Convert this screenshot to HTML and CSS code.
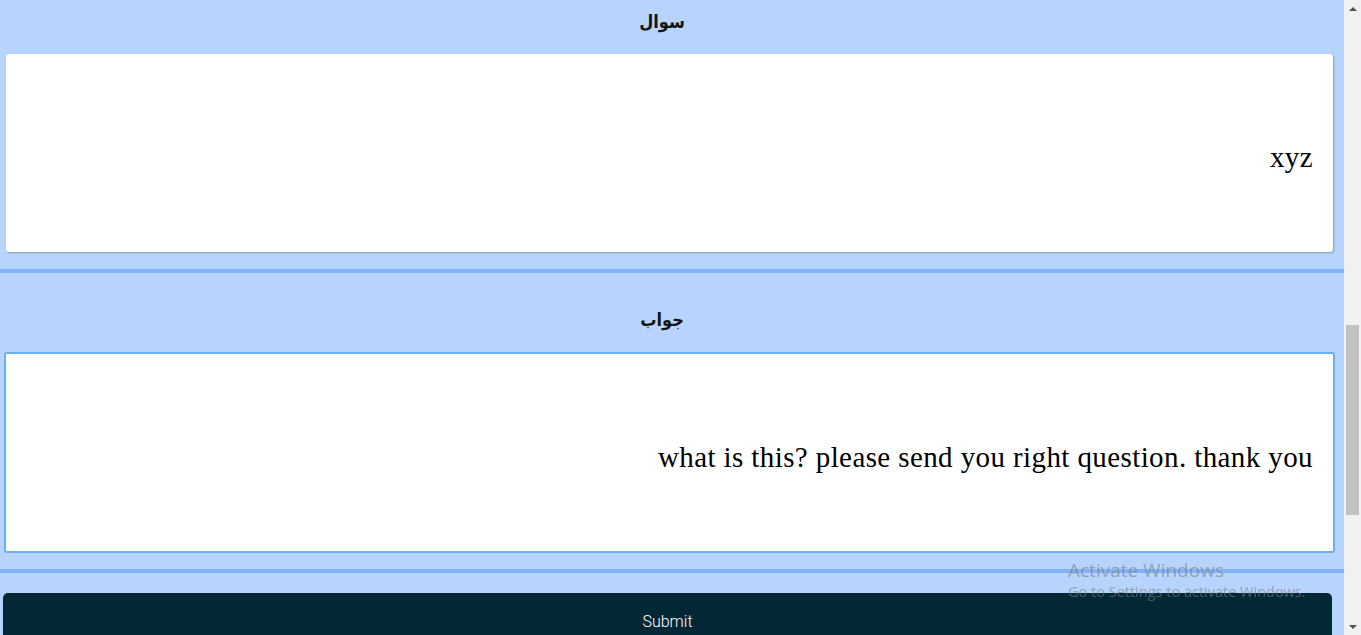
FILE: index.html
```html
<!DOCTYPE html>
<html lang="ur">
<head>
<meta charset="utf-8">
<title>سوال و جواب</title>
<link rel="stylesheet" href="styles.css">
</head>
<body>
<main class="page">
  <div class="earlier"></div>
  <section class="field">
    <hr class="rule">
    <h3 class="label">سوال</h3>
    <div class="box question" dir="ltr"><span>xyz</span></div>
  </section>
  <section class="field">
    <hr class="rule">
    <h3 class="label">جواب</h3>
    <div class="box answer" dir="ltr"><span>what is this? please send you right question. thank you</span></div>
  </section>
  <hr class="rule rule-last">
  <div class="actions">
    <button class="submit" type="button">Submit</button>
  </div>
  <div class="after"></div>
</main>
<div class="scrollbar" aria-hidden="true">
  <div class="sb-btn"><span class="sb-arrow up"></span></div>
  <div class="sb-track"><div class="sb-thumb" style="margin-top: 308px; height: 190px;"></div></div>
  <div class="sb-btn"><span class="sb-arrow down"></span></div>
</div>
<div class="watermark">
  <div class="wm-title">Activate Windows</div>
  <div class="wm-sub">Go to Settings to activate Windows.</div>
</div>
<script src="script.js"></script>
</body>
</html>
```
FILE: styles.css
```css
html, body {
  margin: 0;
  padding: 0;
}
body {
  background: #b7d4fc;
  font-family: "Liberation Serif", serif;
}
.page {
  display: flex;
  flex-direction: column;
  margin-right: 17px;
}
.earlier {
  height: 1000px;
}
.field {
  display: flex;
  flex-direction: column;
}
.rule {
  margin: 0;
  border: 0;
  height: 4px;
  background: #80b3f9;
}
.label {
  margin: 0;
  padding: 32px 20px 17px 0;
  font: bold 18px/30px "DejaVu Sans Condensed", "DejaVu Sans", sans-serif;
  text-align: center;
  color: #141414;
}
.box {
  background: #fff;
  border-radius: 3px;
  display: flex;
  align-items: center;
  justify-content: flex-end;
  font: 29px/32px "Liberation Serif", serif;
  letter-spacing: 0.4px;
  color: #000;
  box-sizing: border-box;
  padding-top: 8px;
}
.question {
  height: 198px;
  margin: 0 11px 17px 6px;
  padding-right: 20px;
  box-shadow: 1px 1px 2px rgba(0, 0, 0, 0.28);
}
.answer {
  height: 201px;
  margin: 0 9px 16px 4px;
  padding-right: 20px;
  border: 2px solid #6cb0f6;
}
.actions {
  padding: 20px 12px 0 3px;
  display: flex;
}
.submit {
  flex: 1;
  height: 56px;
  border: 0;
  border-radius: 5px;
  background: #022836;
  color: #fff;
  font: 300 16px "Roboto", sans-serif;
}
.after {
  height: 320px;
}
.scrollbar {
  position: fixed;
  top: 0;
  right: 0;
  width: 17px;
  height: 100%;
  background: #f1f1f1;
  display: flex;
  flex-direction: column;
}
.sb-btn {
  height: 17px;
  display: flex;
  align-items: center;
  justify-content: center;
}
.sb-arrow {
  width: 0;
  height: 0;
  border-left: 4px solid transparent;
  border-right: 4px solid transparent;
}
.sb-arrow.up {
  border-bottom: 4px solid #505050;
}
.sb-arrow.down {
  border-top: 4px solid #505050;
}
.sb-track {
  flex: 1;
  display: flex;
  flex-direction: column;
  align-items: center;
}
.sb-thumb {
  width: 13px;
  background: #c1c1c1;
}
.watermark {
  position: fixed;
  left: 1068px;
  top: 558px;
  font-family: "Open Sans", "Noto Sans", sans-serif;
  color: rgba(125, 125, 125, 0.6);
  pointer-events: none;
}
.wm-title {
  font-size: 19px;
  line-height: 24px;
}
.wm-sub {
  font-size: 14.5px;
  line-height: 20px;
}
```
FILE: script.js
```js
window.addEventListener('DOMContentLoaded', function () {
  var rule = document.querySelector('.field .rule');
  var top = rule.getBoundingClientRect().top + window.scrollY;
  window.scrollTo(0, top + 29);
});
```
